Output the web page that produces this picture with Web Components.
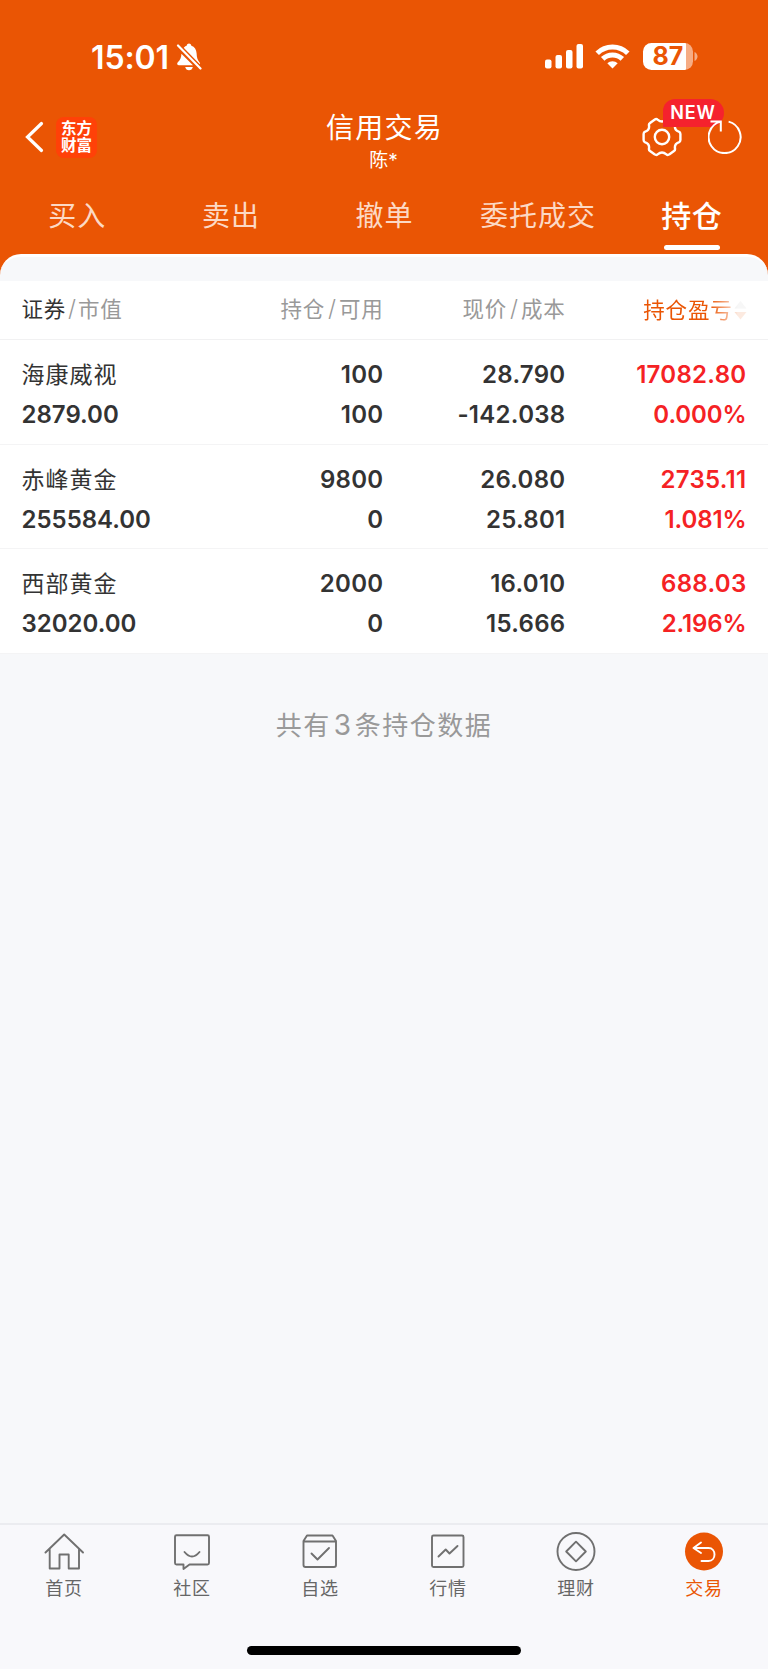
<!DOCTYPE html>
<html lang="zh-CN">
<head>
<meta charset="UTF-8">
<meta name="viewport" content="width=device-width, initial-scale=1.0">
<title>信用交易</title>
<style>
  body {
    margin: 0;
    font-family: Inter, "Noto Sans CJK SC", sans-serif;
    color: #333;
    background: #f7f8fa;
  }
</style>
</head>
<body>
<trade-app></trade-app>

<script>
(function() {

  // attach an open shadow root and fill it
  function shadow(el, html) {
    el.attachShadow({ mode: 'open' }).innerHTML = html;
  }

  class StatusBar extends HTMLElement {
    connectedCallback() {
      shadow(this, `
        <style>
          :host {
            display: flex;
            justify-content: space-between;
            align-items: center;
            box-sizing: border-box;
            height: 112px;
            padding: 1px 70px 0 91px;
            color: #fff;
          }
          .left, .right { display: flex; align-items: center; }
          .time { padding-top: 2px; font-size: 32px; font-weight: 600; line-height: 40px; letter-spacing: -0.1px; }
          .bell { margin-left: 7px; }
          .wifi { margin: 0 13px 0 12px; }
          svg { display: block; }
          .battery { display: flex; align-items: center; }
          .level {
            width: 50px;
            height: 27px;
            line-height: 27px;
            border-radius: 8.5px;
            background: linear-gradient(to right, #fff 43px, #f6ac84 43px);
            color: #ea5504;
            font-size: 25px;
            font-weight: 700;
            text-align: center;
          }
        </style>
        <div class="left">
          <span class="time">15:01</span>
          <svg class="bell" width="26" height="28" viewBox="0 0 26 28" fill="#fff">
            <path d="M6.2 7.5C7.2 4.6 9 3.2 10.6 2.7C11 1.3 11.9.6 13 .6s2 .7 2.4 2.1c3.2 1 5 4 5.2 7.6c.2 4.4.8 6.6 3 9.2c.7.9.5 1.7.3 2.1z"/>
            <path d="M5.4 10.8L17 22.3H3c-1.8 0-2.4-1.6-1.2-3c2.6-2.6 3.4-4.4 3.6-8.500z"/>
            <path d="M9.200 24h7.600c-.4 2-1.800 3.300-3.800 3.300S9.600 26 9.200 24z"/>
            <path d="M2 2.500L24.500 25.500" stroke="#ea5504" stroke-width="5"/>
            <path d="M2 2.500L24.500 25.500" stroke="#fff" stroke-width="2.200" stroke-linecap="round"/>
          </svg>
        </div>
        <div class="right">
          <svg width="38" height="25" viewBox="0 0 38 25" fill="#fff">
            <rect x="0" y="15.500" width="6.500" height="9" rx="2"/>
            <rect x="10.500" y="11" width="6.500" height="13.500" rx="2"/>
            <rect x="21" y="6" width="6.500" height="18.500" rx="2"/>
            <rect x="31.500" y="0" width="6.500" height="24.500" rx="2"/>
          </svg>
          <svg class="wifi" width="35" height="25" viewBox="0 0 35 25" fill="none" stroke="#fff" stroke-width="5">
            <path d="M2.200 9.300a21.800 21.800 0 0 1 30.600 0"/>
            <path d="M7.700 14.900a14 14 0 0 1 19.600 0"/>
            <path d="M17.500 24.500l-5.200-5.200a7.400 7.400 0 0 1 10.400 0z" fill="#fff" stroke="none"/>
          </svg>
          <div class="battery">
            <span class="level">87</span>
            <svg width="5" height="9" viewBox="0 0 5 9"><path d="M1.500 0C5.500 1.800 5.500 7.200 1.500 9z" fill="#f6ac84"/></svg>
          </div>
        </div>
      `);
    }
  }

  class TradeHeader extends HTMLElement {
    connectedCallback() {
      shadow(this, `
        <style>
          :host {
            display: grid;
            grid-template-columns: 1fr auto 1fr;
            box-sizing: border-box;
            height: 68px;
            padding: 0 26px 0 25px;
            color: #fff;
          }
          .left { display: flex; align-items: center; height: 50px; }
          /* two characters to a line */
          .logo {
            box-sizing: border-box;
            width: 41px;
            height: 41px;
            margin-left: 12px;
            padding: 2px 5px;
            border-radius: 8px;
            background: #ff4108;
            font: 700 15.500px/17.500px "Noto Sans CJK SC", sans-serif;
            word-break: break-all;
          }
          .title { text-align: center; }
          .title div { padding-left: 2px; font-size: 28px; line-height: 32px; letter-spacing: 1.200px; }
          .title small { display: block; font-size: 19px; line-height: 34px; }
          .right { display: flex; justify-content: flex-end; align-items: center; height: 50px; }
          .setting { position: relative; margin-right: 26px; }
          .badge {
            position: absolute;
            left: 20.500px;
            top: -18px;
            width: 61px;
            height: 28px;
            border-radius: 12px 14px 14px 0;
            background: #f5222d;
            font-size: 18px;
            font-weight: 600;
            line-height: 28px;
            letter-spacing: .8px;
            text-align: center;
          }
          .refresh { position: relative; }
          svg { display: block; }
        </style>
        <div class="left">
          <svg width="19" height="32" viewBox="0 0 19 32" fill="none" stroke="#fff" stroke-width="3.200" stroke-linecap="round"><path d="M16.500 2.500L2.500 16l14 13.500"/></svg>
          <div class="logo">东方财富</div>
        </div>
        <div class="title"><div>信用交易</div><small>陈*</small></div>
        <div class="right">
          <div class="setting">
            <svg width="40" height="40" viewBox="0 0 40 40" fill="none" stroke="#fff" stroke-width="2.400" stroke-linejoin="round">
              <path d="M38.400 17Q38.400 15.200 36.800 14.600C33.500 13.500 32.500 11.500 33 8.500Q33.300 6.700 32 5.900L27.500 2.700Q25.700 1.500 24.400 2.700C21.500 5.200 18.500 5.200 15.600 2.700Q14.300 1.500 12.500 2.700L8 5.900Q6.700 6.700 7 8.500C7.500 11.500 6.500 13.500 3.200 14.600Q1.600 15.200 1.600 17V23Q1.600 24.800 3.200 25.400C6.500 26.500 7.500 28.500 7 31.500Q6.700 33.300 8 34.100L12.500 37.300Q14.300 38.500 15.600 37.300C18.500 34.800 21.500 34.800 24.400 37.300Q25.700 38.500 27.500 37.300L32 34.100Q33.300 33.300 33 31.500C32.500 28.500 33.500 26.500 36.800 25.400Q38.400 24.800 38.400 23z"/>
              <circle cx="20" cy="20" r="7.200"/>
            </svg>
            <span class="badge">NEW</span>
          </div>
          <svg class="refresh" width="34" height="34" viewBox="0 0 34 34" fill="none" stroke="#fff" stroke-width="2">
            <path d="M20.600 1.600A16 16 0 1 1 12.600 1.600M2.500 1.500H12.800V11.500"/>
          </svg>
        </div>
      `);
    }
  }

  class TradeTabs extends HTMLElement {
    connectedCallback() {
      shadow(this, `
        <style>
          :host { display: flex; height: 74px; color: #fcd9c5; }
          span {
            flex: 1;
            display: flex;
            flex-direction: column;
            align-items: center;
            padding: 15px 0 0 1px;
            font-size: 28px;
            line-height: 42px;
            letter-spacing: 1px;
            white-space: nowrap;
          }
          .on { color: #fff; font-size: 30px; font-weight: 500; letter-spacing: .5px; }
          .on::after {
            content: '';
            width: 56px;
            height: 5px;
            margin-top: 8px;
            border-radius: 3px;
            background: #fff;
          }
        </style>
        <span>买入</span><span>卖出</span><span>撤单</span><span>委托成交</span><span class="on">持仓</span>
      `);
    }
  }

  class PositionRow extends HTMLElement {
    connectedCallback() {
      const [name, value, hold, usable, price, cost, profit, rate] = this.getAttribute('data').split(',');
      shadow(this, `
        <style>
          :host {
            display: grid;
            grid-template-columns: 200px 162px 182px 181px;
            grid-template-rows: 40px 39px;
            box-sizing: border-box;
            height: 104.700px;
            padding: 15px 21.500px 0;
            border-bottom: 1.500px solid #f4f4f5;
            background: #fff;
            font-size: 24px;
            font-weight: 600;
            line-height: 40px;
            letter-spacing: .3px;
            text-align: right;
          }
          .name { font-size: 23px; font-weight: 400; letter-spacing: 1px; }
          .name, .value { text-align: left; }
          .value { letter-spacing: 0; }
          .up { color: #f52224; }
          .rate { letter-spacing: -.1px; }
        </style>
        <span class="name">${name}</span><span>${hold}</span><span>${price}</span><span class="up">${profit}</span>
        <span class="value">${value}</span><span>${usable}</span><span>${cost}</span><span class="up rate">${rate}</span>
      `);
    }
  }

  class PositionTable extends HTMLElement {
    connectedCallback() {
      shadow(this, `
        <style>
          :host {
            display: block;
            padding-top: 24px;
            border-top: 3px solid #fff;
            border-radius: 21px 21px 0 0;
            background: #f7f8fa;
          }
          .head {
            display: grid;
            grid-template-columns: 200px 162px 182px 181px;
            height: 58px;
            padding: 0 21.500px;
            border-bottom: 1.500px solid #f1f1f2;
            background: #fff;
            color: #999;
            font-size: 21.500px;
            line-height: 56px;
            letter-spacing: .8px;
            text-align: right;
          }
          .head i { margin: 0 2px 0 3px; font-size: 23px; font-style: normal; font-weight: 300; }
          .head :first-child { text-align: left; }
          .head :first-child i { margin: 0 1px 0 2px; }
          b { color: #333; font-weight: 400; }
          .sort {
            display: flex;
            justify-content: flex-end;
            align-items: center;
            color: #ea5504;
            -webkit-mask-image: linear-gradient(to right, #000 144px, rgba(0, 0, 0, .12) 172px);
            mask-image: linear-gradient(to right, #000 144px, rgba(0, 0, 0, .12) 172px);
          }
          .sort svg { margin-left: 1px; }
        </style>
        <div class="head">
          <span><b>证券</b><i>/</i>市值</span>
          <span>持仓<i>/</i>可用</span>
          <span>现价<i>/</i>成本</span>
          <span class="sort">持仓盈亏<svg width="13" height="19" viewBox="0 0 13 19"><path d="M6.500 0L12.500 7.500H.5z" fill="#bbb"/><path d="M.5 11h12l-6 7.500z" fill="#ea5504"/></svg></span>
        </div>
        <slot></slot>
      `);
    }
  }

  class TabItem extends HTMLElement {
    connectedCallback() {
      shadow(this, `
        <style>
          :host {
            flex: 1;
            display: flex;
            flex-direction: column;
            align-items: center;
            padding-top: 7px;
            color: #666;
            font-size: 18px;
            line-height: 26px;
            letter-spacing: .8px;
          }
          :host([active]) { color: #ea5504; }
          svg { display: block; margin-bottom: 4px; }
        </style>
        <svg width="40" height="40" viewBox="0 0 40 40" fill="none" stroke="#707070" stroke-width="1.900" stroke-linejoin="round" stroke-linecap="round">${icons[this.getAttribute('icon')]}</svg>
        <slot></slot>
      `);
    }
  }

  const icons = {
    home: '<path d="M1.500 20.500L20.200 2.500L39 20.500M5.700 17.500V36.500H15.500V22.500H24.700V36.500H35V17.500"/>',
    chat: '<path d="M4.500 3.200H35.500Q37 3.200 37 4.700V31Q37 32.500 35.500 32.500H17.500L11.500 37V32.500H4.500Q3 32.500 3 31V4.700Q3 3.200 4.500 3.200zM12.500 20Q20 29 27.500 20"/>',
    pick: '<path d="M3.500 9L7 3.500H32.500L36 9V33Q36 35 34 35H5.500Q3.500 35 3.500 33zM3.500 9.500H36M11.500 21.500L17.500 27.500L29 16"/>',
    chart: '<rect x="4" y="3.500" width="31.500" height="31.500" rx="1.500"/><path d="M10.500 24.500L17.700 17.500L21.500 21.500L29.500 14"/>',
    money: '<circle cx="20" cy="19.500" r="18.500"/><path d="M20 9.700L29.800 19.500L20 29.300L10.200 19.500z"/>',
    trade: '<circle cx="20" cy="19.500" r="19" fill="#ea5504" stroke="none"/><path d="M17 10.500L9.500 16L17 21M9.500 16H24.500C32.500 16 32.500 29 24.500 29H17.500" stroke="#fff"/>'
  };

  class TabBar extends HTMLElement {
    connectedCallback() {
      shadow(this, `
        <style>
          :host {
            display: flex;
            flex-direction: column;
            justify-content: space-between;
            align-items: center;
            box-sizing: border-box;
            height: 146px;
            padding-bottom: 14px;
            border-top: 2px solid #ebecf0;
            background: #f8f8fb;
          }
          nav { display: flex; width: 100%; }
          .home { width: 274px; height: 9px; border-radius: 5px; background: #000; }
        </style>
        <nav><slot></slot></nav>
        <div class="home"></div>
      `);
    }
  }

  class TradeApp extends HTMLElement {
    connectedCallback() {
      shadow(this, `
        <style>
          :host { display: flex; flex-direction: column; height: 1669px; background: #f7f8fa; }
          .top { background: #ea5504; }
          main { flex: 1; }
          p {
            margin: 51px 0 0;
            color: #999;
            font-size: 26px;
            line-height: 40px;
            letter-spacing: 1.500px;
            text-align: center;
          }
          p span { margin: 0 2px 0 3px; font-size: 28px; }
        </style>
        <div class="top">
          <status-bar></status-bar>
          <trade-header></trade-header>
          <trade-tabs></trade-tabs>
          <position-table>
            <position-row data="海康威视,2879.00,100,100,28.790,-142.038,17082.80,0.000%"></position-row>
            <position-row data="赤峰黄金,255584.00,9800,0,26.080,25.801,2735.11,1.081%"></position-row>
            <position-row data="西部黄金,32020.00,2000,0,16.010,15.666,688.03,2.196%"></position-row>
          </position-table>
        </div>
        <main><p>共有<span>3</span>条持仓数据</p></main>
        <tab-bar>
          <tab-item icon="home">首页</tab-item>
          <tab-item icon="chat">社区</tab-item>
          <tab-item icon="pick">自选</tab-item>
          <tab-item icon="chart">行情</tab-item>
          <tab-item icon="money">理财</tab-item>
          <tab-item icon="trade" active>交易</tab-item>
        </tab-bar>
      `);
    }
  }

  customElements.define('status-bar', StatusBar);
  customElements.define('trade-header', TradeHeader);
  customElements.define('trade-tabs', TradeTabs);
  customElements.define('position-row', PositionRow);
  customElements.define('position-table', PositionTable);
  customElements.define('tab-item', TabItem);
  customElements.define('tab-bar', TabBar);
  customElements.define('trade-app', TradeApp);
})();
</script>
</body>
</html>
